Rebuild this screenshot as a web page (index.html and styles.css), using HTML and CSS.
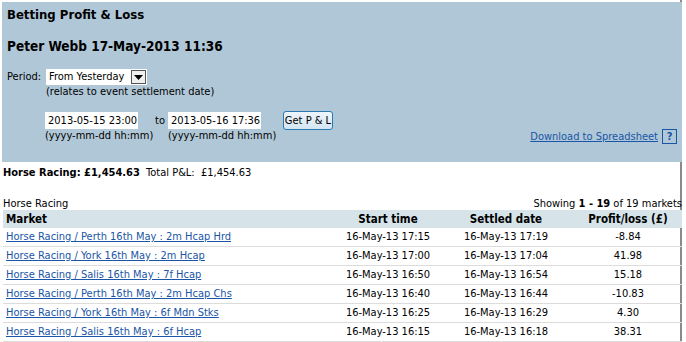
FILE: index.html
```html
<!DOCTYPE html>
<html>
<head>
<meta charset="utf-8">
<link rel="stylesheet" href="styles.css">
</head>
<body>
<div class="page">
  <div class="panel">
    <h1 class="title">Betting Profit &amp; Loss</h1>
    <h2 class="subtitle">Peter Webb 17-May-2013 11:36</h2>
    <div class="period-row">
      <span class="label">Period:</span>
      <div class="period-col">
        <div class="select"><span class="select-text">From Yesterday</span><span class="select-btn"><svg width="9" height="5" viewBox="0 0 9 5"><path d="M0 0H9L4.5 5Z" fill="#000"/></svg></span></div>
        <div class="note">(relates to event settlement date)</div>
      </div>
    </div>
    <div class="range-row">
      <div class="field">
        <div class="input">2013-05-15 23:00</div>
        <div class="hint">(yyyy-mm-dd hh:mm)</div>
      </div>
      <span class="to">to</span>
      <div class="field">
        <div class="input">2013-05-16 17:36</div>
        <div class="hint">(yyyy-mm-dd hh:mm)</div>
      </div>
      <div class="button">Get P &amp; L</div>
      <div class="download"><a href="#" class="link">Download to Spreadsheet </a><span class="help">?</span></div>
    </div>
  </div>
  <div class="summary"><b>Horse Racing: £1,454.63</b>&nbsp; Total P&amp;L:&nbsp; £1,454.63</div>
  <div class="caption-row"><span>Horse Racing</span><span>Showing <b>1 - 19</b> of 19 markets</span></div>
  <table class="grid">
    <thead>
      <tr><th class="c-market">Market</th><th class="c-start">Start time</th><th class="c-settled">Settled date</th><th class="c-pl">Profit/loss (£)</th></tr>
    </thead>
    <tbody>
      <tr><td><a href="#" class="link">Horse Racing / Perth 16th May : 2m Hcap Hrd</a></td><td>16-May-13 17:15</td><td>16-May-13 17:19</td><td>-8.84</td></tr>
      <tr><td><a href="#" class="link">Horse Racing / York 16th May : 2m Hcap</a></td><td>16-May-13 17:00</td><td>16-May-13 17:04</td><td>41.98</td></tr>
      <tr><td><a href="#" class="link">Horse Racing / Salis 16th May : 7f Hcap</a></td><td>16-May-13 16:50</td><td>16-May-13 16:54</td><td>15.18</td></tr>
      <tr><td><a href="#" class="link">Horse Racing / Perth 16th May : 2m Hcap Chs</a></td><td>16-May-13 16:40</td><td>16-May-13 16:44</td><td>-10.83</td></tr>
      <tr><td><a href="#" class="link">Horse Racing / York 16th May : 6f Mdn Stks</a></td><td>16-May-13 16:25</td><td>16-May-13 16:29</td><td>4.30</td></tr>
      <tr><td><a href="#" class="link">Horse Racing / Salis 16th May : 6f Hcap</a></td><td>16-May-13 16:15</td><td>16-May-13 16:18</td><td>38.31</td></tr>
    </tbody>
  </table>
</div>
</body>
</html>
```
FILE: styles.css
```css
html, body {
  margin: 0;
  padding: 0;
  background: #fff;
}
body {
  font-family: "DejaVu Sans Condensed", "DejaVu Sans", sans-serif;
  font-size: 11px;
  color: #000;
}
.page {
  width: 682px;
  border-right: 2px solid #8a8a8a;
  min-height: 342px;
  padding-top: 2px;
  box-sizing: border-box;
}
.panel {
  margin-left: 2px;
  width: 680px;
  height: 160px;
  background: #b0c7d7;
  padding: 5px 4px 0 5px;
  box-sizing: border-box;
}
.title {
  margin: 0;
  font-size: 13px;
  font-weight: bold;
  line-height: 16px;
}
.subtitle {
  margin: 14px 0 0;
  font-size: 13.5px;
  font-weight: bold;
  line-height: 18px;
}
.period-row {
  display: flex;
  margin-top: 14px;
}
.label {
  width: 39px;
  line-height: 16px;
}
.period-col {
  display: flex;
  flex-direction: column;
}
.select {
  display: flex;
  align-items: center;
  width: 101px;
  height: 16px;
  background: #fff;
  box-sizing: border-box;
  padding-left: 3px;
}
.select-text {
  flex: 1;
  line-height: 16px;
}
.select-btn {
  width: 15px;
  height: 14px;
  margin-right: 1px;
  box-sizing: border-box;
  border: 1px solid #555;
  background: #f0f0f0;
  display: flex;
  align-items: center;
  justify-content: center;
}
.note {
  line-height: 13px;
}
.range-row {
  display: flex;
  align-items: flex-start;
  margin-top: 14px;
  padding-left: 38px;
}
.field {
  display: flex;
  flex-direction: column;
  width: 93px;
}
.input {
  width: 93px;
  height: 17px;
  background: #fff;
  line-height: 17px;
  padding-left: 3px;
  box-sizing: border-box;
}
.hint {
  line-height: 14px;
  white-space: nowrap;
}
.to {
  margin-left: 17px;
  margin-right: 5px;
  width: 8px;
  line-height: 17px;
  white-space: nowrap;
}
.button {
  margin-left: 22px;
  margin-top: -1px;
  width: 50px;
  height: 19px;
  box-sizing: border-box;
  border: 1px solid #2a7ab0;
  border-radius: 3px;
  background: linear-gradient(#eef5fb, #d3e6f4);
  line-height: 17px;
  text-align: center;
  white-space: nowrap;
}
.download {
  margin-left: auto;
  margin-top: 17px;
  display: flex;
  align-items: center;
  margin-right: 1px;
}
.link {
  color: #1a55a6;
  text-decoration: underline;
}
.help {
  margin-left: 4px;
  width: 15px;
  height: 15px;
  box-sizing: border-box;
  border: 1px solid #1a55a6;
  color: #1a55a6;
  font-weight: bold;
  text-align: center;
  line-height: 13px;
}
.summary {
  margin: 3px 0 0 3px;
  line-height: 16px;
}
.caption-row {
  display: flex;
  justify-content: space-between;
  margin: 16px 0 0 3px;
  line-height: 14px;
  width: 679px;
}
.grid {
  margin-left: 3px;
  margin-top: -1px;
  width: 679px;
  border-collapse: collapse;
  table-layout: fixed;
}
.grid th {
  background: #d6e4ea;
  font-weight: bold;
  font-size: 11.5px;
  height: 18px;
  padding: 0;
  text-align: center;
}
.grid th.c-market {
  text-align: left;
  padding-left: 3px;
  width: 332px;
}
.grid th.c-start { width: 100px; }
.grid th.c-settled { width: 136px; }
.grid td {
  height: 18px;
  padding: 0;
  border-bottom: 1px solid #dcdcdc;
  text-align: center;
  white-space: nowrap;
  line-height: 14px;
}
.grid td:first-child {
  text-align: left;
  padding-left: 3px;
}
```
